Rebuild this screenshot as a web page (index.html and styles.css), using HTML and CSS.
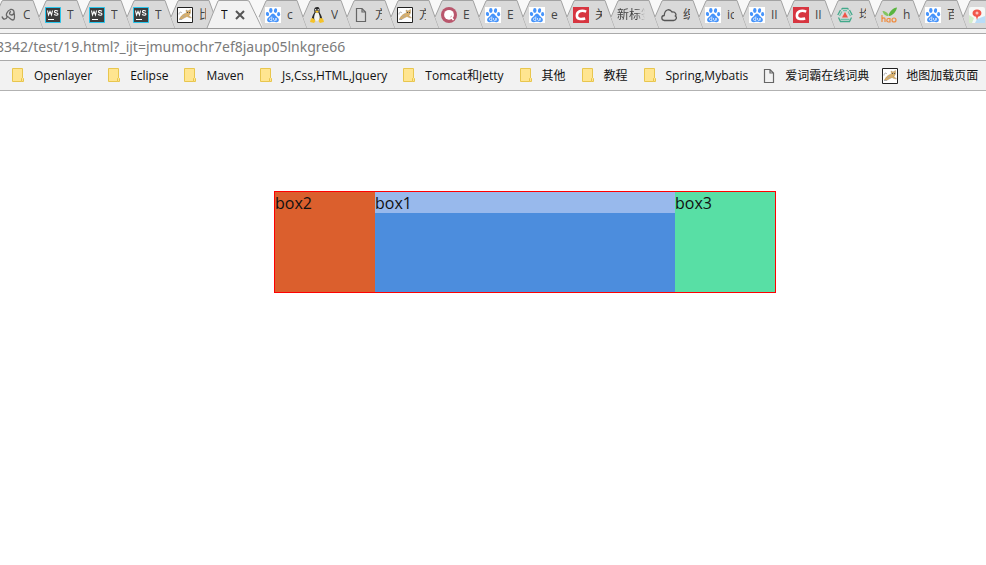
FILE: index.html
```html
<!DOCTYPE html>
<html lang="zh-CN">
<head>
<meta charset="utf-8">
<title>T</title>
<link rel="stylesheet" href="styles.css">
</head>
<body>
<svg class="sprite" aria-hidden="true">
  <symbol id="tab" viewBox="0 0 52 28"><path class="tab-fill" d="M3 17 10.500 0H41L51 28H7Z"/><path class="tab-line" d="M3 17 10 1 11 .5H41L51 28"/></symbol>
  <symbol id="tab-active" viewBox="0 0 58 29"><path class="active-fill" d="M1 29 12 0H42L57 29Z"/><path class="tab-line" d="M1 28 12 1 13 .5H41L43 1 56 28"/></symbol>
  <symbol id="swirl" viewBox="0 0 16 16"><g fill="none" stroke="#666" stroke-width="1.300"><path d="M1 9.500C2 13 5 13 6.500 9.500 4 9 6 3.500 9.500 2.500 14 1.500 14 8 10.500 8 8 8 8 5 10 4.500M13 5.500C14 10 13.500 13 12 13 10 13 8.500 10.500 6.500 9.500"/></g></symbol>
  <symbol id="ws" viewBox="0 0 16 16"><path fill="#3d3d3d" stroke="#28c5ec" d="M.5.5h15v15H.5z"/><path fill="none" stroke="#fff" stroke-width="1.100" d="M2.500 3.500 3.500 8 5 4.500 6.500 8 7.500 3.500M13 4.200C11 3 9.200 3.500 9.600 5S13 5.500 13 7 11 8.600 9 7.500"/><path fill="#fff" d="M3 12h6v1H3z"/></symbol>
  <symbol id="cat" viewBox="0 0 16 16"><path fill="#fff" stroke="#222" d="M.5.5h15v15H.5z"/><path fill="#d9b06b" stroke="#a48450" stroke-width=".4" d="M2.500 12C4 9.500 4.500 8 8 6.500L9.500 6 9 3 11 4 13.500 2.500V6L12 8.500 14.500 11 12 10.500 10 9.500 7 11 4.500 12.500Z"/><path fill="none" stroke="#aaa" d="M5 6C3 4 2 6 2 7.500M8 8.500 5.500 10M2 12.500h3"/><path fill="#555" d="M10 5h1v1h-1zM12 5h1v1h-1z"/></symbol>
  <symbol id="paw" viewBox="0 0 16 16"><path fill="#fff" d="M0 0h16v16H0z"/><g fill="#4694fb"><ellipse cx="5.800" cy="3.500" rx="1.700" ry="2.400"/><ellipse cx="10.500" cy="3.600" rx="1.600" ry="2.300" transform="rotate(12 10.500 3.600)"/><ellipse cx="2.500" cy="7" rx="1.600" ry="2.100" transform="rotate(-15 2.500 7)"/><ellipse cx="13.600" cy="7.200" rx="1.500" ry="2.100"/><path d="M8 6.500C9.800 6.500 10.300 9 12.200 10.200 15 12 14 15.500 11 15.200 9 14.700 7 14.700 5 15.200 2 15.500 1 12.300 3.600 10.300 5.600 9 6 6.500 8 6.500Z"/></g><path fill="none" stroke="#fff" stroke-width=".7" d="M6.800 9.500v4H5.500C4 13.500 4 11 5.500 11H6.500M8.500 11v1.500c0 1.200 2.500 1.200 2.500 0V11v2.800"/></symbol>
  <symbol id="tux" viewBox="0 0 16 16"><path fill="#292929" d="M8 0C5 0 5 3 5.500 5 5 7 2.500 9 3 13H13C13.500 9 11 7 10.500 5 11 2 10.500 0 8 0Z"/><path fill="#f5f5ef" d="M6.500 5.500C5.500 8 4.500 10 5.500 13L8 14 10.500 13C11.500 10 10 7 9.500 5.500Z"/><path fill="#f5c329" d="M6 4.200 8 3.500 10 4.500 8 6ZM1 15 2 11.500 4 11 6.500 14 5 16ZM15 15 14 11.500 11 11 9.500 14 11 16Z"/><path fill="#fff" d="M6.200 2h1v1.500h-1zM8.700 2h1v1.500h-1z"/></symbol>
  <symbol id="page" viewBox="0 0 16 16"><path fill="none" stroke="#666" stroke-width="1.200" d="M3.500 1.500H9L12.500 5V14.500H3.500ZM9 1.500V5H12.500"/></symbol>
  <symbol id="ring" viewBox="0 0 16 16"><circle cx="8" cy="8" r="8" fill="#b9566c"/><circle cx="8" cy="7.800" r="4.900" fill="#fff"/><path fill="none" stroke="#b9566c" stroke-width="1" d="M9 10.500 11 9"/><path fill="none" stroke="#fff" stroke-width="1.600" d="M9.500 9.500 12.500 13"/></symbol>
  <symbol id="letter-mark" viewBox="0 0 16 16"><path fill="#d73540" d="M0 0h16v16H0z"/><path fill="none" stroke="#fff" stroke-width="2.600" d="M13.200 4.600C8 2.500 4 4.600 3.900 8.500 3.700 12 7.500 12.600 12.200 11.500"/></symbol>
  <symbol id="cloud" viewBox="0 0 16 16"><path fill="none" stroke="#555" stroke-width="1.300" d="M3.500 13.500C0 13 0 8.800 3.200 8.500 3.500 2.500 8.500 1 11 5 15 4.500 15.500 8 14.300 9 16.500 10.500 15 13.500 12.500 13.500Z"/></symbol>
  <symbol id="triangle" viewBox="0 0 16 16"><g fill="none" stroke="#42a98a" stroke-width="1.300"><path d="M4.500 2.500 5.500 1.300H10.500L11.500 2.500M3.500 3 .8 8M12.500 3 15.200 8M1.500 10.500 3.500 14.500H12.500L14.500 10.500"/><path d="M6 3.500H10M5 4.500 2.500 9M11 4.500 13.500 9M3.500 12.300h9" stroke="#70c2aa"/></g><path fill="#ee5548" d="M8 5 11 10.500H5Z"/></symbol>
  <symbol id="leaf" viewBox="0 0 16 16"><path fill="#59b53f" d="M7.500 8C9 4 12 1 16 .5 15.500 4 12 8.500 8 9Z"/><path fill="#83c55f" d="M7 9C5 9 2 7 1.500 4 4 4 7 6 7.500 8Z"/><path fill="none" stroke="#f08a3c" stroke-width="1.200" d="M1 8v7M1 12C2 10.500 4 10.500 4 12v3M9 11v4H7.500C5 15 5.500 11.500 7.500 11.500H9"/><circle cx="13" cy="13" r="2" fill="none" stroke="#f08a3c" stroke-width="1.200"/></symbol>
  <symbol id="pin" viewBox="0 0 16 16"><rect width="16" height="16" rx="2" fill="#f6f8f7"/><path fill="#d5edc9" d="M0 8 5 11 3 16H0Z"/><path fill="#b9dcf8" d="M6 16 8 12 16 9V16Z"/><path fill="#f2564b" d="M8 13 7 9.800C2 9 2.500 2.500 8 2.500s6 6.500 1 7.300Z"/><circle cx="8" cy="6" r="1.500" fill="#fbc2bc"/></symbol>
  <symbol id="folder" viewBox="0 0 12 15"><path fill="#ffe590" stroke="#e8c64e" d="M.5.5h10V10L9.500 11V13.500H.5Z"/><path fill="#ffe590" stroke="#e8c64e" d="M9.500 13.500V10.500L10.500 9.500 11.500 10.500V13.500Z"/></symbol>
</svg>
<header class="browser">
  <nav class="tabs" aria-label="Tabs">
    <button class="tab"><svg class="shape"><use href="#tab"/></svg><svg class="icon"><use href="#swirl"/></svg><span class="label">C</span></button>
    <button class="tab"><svg class="shape"><use href="#tab"/></svg><svg class="icon"><use href="#ws"/></svg><span class="label">T</span></button>
    <button class="tab"><svg class="shape"><use href="#tab"/></svg><svg class="icon"><use href="#ws"/></svg><span class="label">T</span></button>
    <button class="tab"><svg class="shape"><use href="#tab"/></svg><svg class="icon"><use href="#ws"/></svg><span class="label">T</span></button>
    <button class="tab"><svg class="shape"><use href="#tab"/></svg><svg class="icon"><use href="#cat"/></svg><span class="label">比</span></button>
    <button class="tab active"><svg class="shape"><use href="#tab-active"/></svg><span class="label">T</span><svg class="close" viewBox="0 0 8 8"><path d="M0 0 8 8M8 0 0 8"/></svg></button>
    <button class="tab"><svg class="shape"><use href="#tab"/></svg><svg class="icon"><use href="#paw"/></svg><span class="label">c</span></button>
    <button class="tab"><svg class="shape"><use href="#tab"/></svg><svg class="icon"><use href="#tux"/></svg><span class="label">V</span></button>
    <button class="tab"><svg class="shape"><use href="#tab"/></svg><svg class="icon"><use href="#page"/></svg><span class="label">方</span></button>
    <button class="tab"><svg class="shape"><use href="#tab"/></svg><svg class="icon"><use href="#cat"/></svg><span class="label">方</span></button>
    <button class="tab"><svg class="shape"><use href="#tab"/></svg><svg class="icon"><use href="#ring"/></svg><span class="label">E</span></button>
    <button class="tab"><svg class="shape"><use href="#tab"/></svg><svg class="icon"><use href="#paw"/></svg><span class="label">E</span></button>
    <button class="tab"><svg class="shape"><use href="#tab"/></svg><svg class="icon"><use href="#paw"/></svg><span class="label">e</span></button>
    <button class="tab"><svg class="shape"><use href="#tab"/></svg><svg class="icon"><use href="#letter-mark"/></svg><span class="label">关</span></button>
    <button class="tab"><svg class="shape"><use href="#tab"/></svg><span class="label wide">新标签</span></button>
    <button class="tab"><svg class="shape"><use href="#tab"/></svg><svg class="icon"><use href="#cloud"/></svg><span class="label">织</span></button>
    <button class="tab"><svg class="shape"><use href="#tab"/></svg><svg class="icon"><use href="#paw"/></svg><span class="label">ic</span></button>
    <button class="tab"><svg class="shape"><use href="#tab"/></svg><svg class="icon"><use href="#paw"/></svg><span class="label">II</span></button>
    <button class="tab"><svg class="shape"><use href="#tab"/></svg><svg class="icon"><use href="#letter-mark"/></svg><span class="label">II</span></button>
    <button class="tab"><svg class="shape"><use href="#tab"/></svg><svg class="icon"><use href="#triangle"/></svg><span class="label">均</span></button>
    <button class="tab"><svg class="shape"><use href="#tab"/></svg><svg class="icon"><use href="#leaf"/></svg><span class="label">h</span></button>
    <button class="tab"><svg class="shape"><use href="#tab"/></svg><svg class="icon"><use href="#paw"/></svg><span class="label">百</span></button>
    <button class="tab"><svg class="shape"><use href="#tab"/></svg><svg class="icon"><use href="#pin"/></svg></button>
  </nav>
  <div class="address"><input type="text" aria-label="Address" value="8342/test/19.html?_ijt=jmumochr7ef8jaup05lnkgre66"></div>
  <nav class="bookmarks" aria-label="Bookmarks">
    <a href="#"><svg class="folder"><use href="#folder"/></svg>Openlayer</a>
    <a href="#"><svg class="folder"><use href="#folder"/></svg>Eclipse</a>
    <a href="#"><svg class="folder"><use href="#folder"/></svg>Maven</a>
    <a href="#"><svg class="folder"><use href="#folder"/></svg>Js,Css,HTML,Jquery</a>
    <a href="#"><svg class="folder"><use href="#folder"/></svg>Tomcat和Jetty</a>
    <a href="#"><svg class="folder"><use href="#folder"/></svg>其他</a>
    <a href="#"><svg class="folder"><use href="#folder"/></svg>教程</a>
    <a href="#"><svg class="folder"><use href="#folder"/></svg>Spring,Mybatis</a>
    <a href="#" class="site"><svg class="icon"><use href="#page"/></svg>爱词霸在线词典</a>
    <a href="#" class="site"><svg class="icon"><use href="#cat"/></svg>地图加载页面</a>
  </nav>
</header>
<main>
  <div class="container">
    <div class="box2">box2</div>
    <div class="box1"><div class="inner">box1</div></div>
    <div class="box3">box3</div>
  </div>
</main>
</body>
</html>
```
FILE: styles.css
```css
* { box-sizing: border-box; }
body {
  margin: 0;
  background: #fff;
  color: #111;
  font-family: "Open Sans", "Noto Sans CJK SC", sans-serif;
  overflow-x: hidden;
}
.sprite { position: absolute; width: 0; height: 0; }
.browser { background: #f2f2f2; }
.tabs {
  display: flex;
  height: 29px;
  overflow: hidden;
  background: #f8f8f8;
  border-bottom: 1px solid #999;
}
.tab {
  position: relative;
  display: flex;
  align-items: center;
  gap: 6px;
  flex: 0 0 44px;
  height: 29px;
  margin: 0;
  padding: 0 0 0 1px;
  border: 0;
  background: none;
  color: #444;
  font: 12px/16px "Open Sans", "Noto Sans CJK SC", sans-serif;
}
.shape { position: absolute; left: -8px; top: 0; width: 52px; height: 28px; }
.tab-fill { fill: #d9d9d9; }
.active-fill { fill: #f2f2f2; }
.tab-line { fill: none; stroke: #a3a3a3; }
.icon { position: relative; flex: none; width: 16px; height: 16px; }
.label {
  position: relative;
  width: 7px;
  overflow: hidden;
  white-space: nowrap;
  text-align: left;
}
.wide {
  width: 28px;
  -webkit-mask-image: linear-gradient(90deg, #000 70%, transparent);
  mask-image: linear-gradient(90deg, #000 70%, transparent);
}
.active { z-index: 1; gap: 8px; color: #111; }
.active .shape { left: -14px; width: 58px; height: 29px; }
.close { position: relative; width: 8px; height: 8px; overflow: visible; }
.close path { stroke: #555; stroke-width: 2; }
.address {
  height: 28px;
  margin-top: 4px;
  border: solid #aaa;
  border-width: 1px 0;
  background: #fff;
}
.address input {
  display: block;
  width: 100%;
  height: 26px;
  margin-left: -4px;
  padding: 0;
  border: 0;
  outline: 0;
  background: none;
  color: #7b7b7b;
  font: 14px/26px "Noto Sans", sans-serif;
}
.bookmarks {
  display: flex;
  align-items: center;
  gap: 16px;
  height: 30px;
  padding-left: 12px;
  border-bottom: 1px solid #b2b2b2;
  overflow: hidden;
}
.bookmarks a {
  display: flex;
  align-items: center;
  gap: 10px;
  flex: none;
  color: #111;
  font-size: 12px;
  line-height: 16px;
  text-decoration: none;
  white-space: nowrap;
}
.bookmarks .site { gap: 8px; margin-left: -3px; }
.folder { width: 12px; height: 15px; }
main { padding: 100px 0 0 64px; }
.container {
  display: grid;
  grid-template-columns: 1fr 3fr 1fr;
  max-width: 502px;
  min-height: 102px;
  margin: 0 auto;
  border: 1px solid #f00;
  font-size: 16px;
  line-height: 19px;
}
.box2, .box3, .inner { padding-top: 2px; }
.box2 { background: #db5f2d; }
.box1 { background: #4c8ddd; }
.inner { background: #98b9ec; }
.box3 { background: #58dfa5; }
```
